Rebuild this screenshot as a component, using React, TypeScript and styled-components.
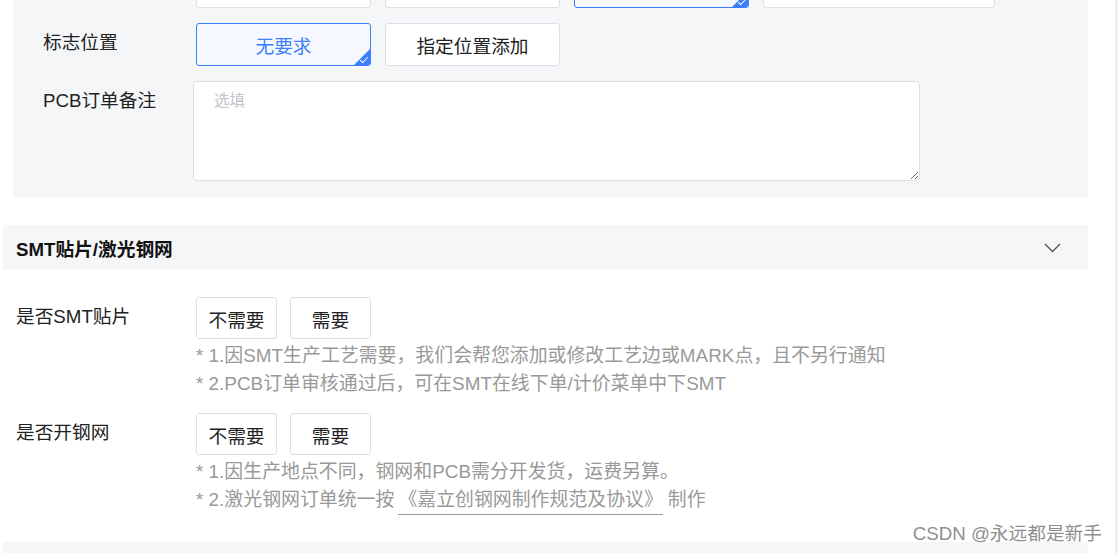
import styled, {createGlobalStyle} from 'styled-components';

const GlobalStyle = createGlobalStyle`
  html, body {
    margin: 0;
    padding: 0;
    background: #fff;
  }
  body {
    font-family: "Liberation Sans", "Noto Sans CJK SC", sans-serif;
    color: #222;
    overflow: hidden;
  }
  * {
    box-sizing: border-box;
  }
`;

const Page = styled.div`
  position: relative;
  display: flex;
  width: 1118px;
  height: 553px;
  overflow: hidden;
`;

const Main = styled.main`
  width: 1085px;
  margin-left: 3px;
  display: flex;
  flex-direction: column;

  & > * {
    flex-shrink: 0;
  }
`;

const ScrollTrack = styled.div`
  margin-left: auto;
  width: 3px;
  background: #eceef3;
`;

const OptionsPanel = styled.section`
  margin: -35px 0 0 10px;
  padding: 0 0 17px 30px;
  background: #f5f6f8;
  display: flex;
  flex-direction: column;
  gap: 15px;
`;

const FormRow = styled.div<{$labelWidth: number}>`
  display: grid;
  grid-template-columns: ${p => p.$labelWidth}px 1fr;
  align-items: start;
`;

const RowLabel = styled.div`
  font-size: 18.7px;
  line-height: 40px;
  color: #222;
  white-space: nowrap;
`;

const Controls = styled.div`
  display: flex;
  flex-direction: column;
  align-items: flex-start;
`;

const OptionGroup = styled.div<{$gap: number; $inset?: number}>`
  display: flex;
  gap: ${p => p.$gap}px;
  padding-left: ${p => p.$inset ?? 0}px;
`;

const OptionButton = styled.button<{$width: number; $height: number; $selected?: boolean}>`
  position: relative;
  width: ${p => p.$width}px;
  height: ${p => p.$height}px;
  padding: 0;
  overflow: hidden;
  border: 1px solid ${p => (p.$selected ? '#3d7efc' : '#dcdfe6')};
  border-radius: 3px;
  background: ${p => (p.$selected ? '#f5f9ff' : '#fff')};
  color: ${p => (p.$selected ? '#3d7efc' : '#222')};
  font-family: inherit;
  font-size: 18.7px;
  white-space: nowrap;
  cursor: pointer;

  &::after {
    content: '';
    display: ${p => (p.$selected ? 'block' : 'none')};
    position: absolute;
    right: 0;
    bottom: 0;
    width: 0;
    height: 0;
    border-left: 16px solid transparent;
    border-bottom: 16px solid #3d7efc;
  }

  &::before {
    content: '';
    display: ${p => (p.$selected ? 'block' : 'none')};
    position: absolute;
    z-index: 1;
    right: 2px;
    bottom: 4px;
    width: 7px;
    height: 3px;
    border-left: 1.5px solid #fff;
    border-bottom: 1.5px solid #fff;
    transform: rotate(-45deg);
  }
`;

const Remark = styled.textarea`
  width: 727px;
  height: 100px;
  margin: 0;
  padding: 9px 20px;
  border: 1px solid #dcdfe6;
  border-radius: 4px;
  background: #fff;
  font-family: inherit;
  font-size: 15.5px;
  line-height: 20px;
  color: #222;
  outline: none;

  &::placeholder {
    color: #c0c4cc;
  }
`;

const SectionHeader = styled.header`
  margin-top: 27px;
  height: 45px;
  padding: 0 27px 0 13px;
  display: flex;
  align-items: center;
  justify-content: space-between;
  background: #f5f6f8;
`;

const SectionTitle = styled.h2`
  margin: 0;
  font-size: 18.7px;
  font-weight: 700;
  color: #111;
`;

const SectionBody = styled.div`
  padding: 27px 0 0 13px;
  display: flex;
  flex-direction: column;
  gap: 15px;
`;

const Notes = styled.div`
  margin-top: 3px;
  font-size: 18.9px;
  line-height: 28px;
  color: #999;
  white-space: nowrap;
`;

const SpecLink = styled.a`
  margin: 0 5px 0 4px;
  padding-bottom: 4px;
  color: #999;
  text-decoration: none;
  border-bottom: 1px solid #999;
`;

const BottomBand = styled.div`
  margin-top: 28px;
  height: 20px;
  background: #f5f6f8;
`;

const Watermark = styled.div`
  position: absolute;
  right: 16px;
  bottom: 8px;
  font-size: 18.7px;
  color: #8f8f8f;
  text-shadow: 0 0 2px #fff;
  white-space: nowrap;
  pointer-events: none;
`;

function ChevronDown() {
  return (
    <svg width="17" height="10" viewBox="0 0 17 10" fill="none">
      <polyline points="1,1 8.5,8.5 16,1" stroke="#555" strokeWidth="1.4" />
    </svg>
  );
}

// first row is scrolled mostly out of view; only the bottom edges of its buttons show
const TOP_OPTIONS = [
  {id: 'a', width: 175},
  {id: 'b', width: 175},
  {id: 'c', width: 175, selected: true},
  {id: 'd', width: 232},
];

export default function App() {
  return (
    <Page>
      <GlobalStyle />
      <Main>
        <OptionsPanel>
          <FormRow $labelWidth={150}>
            <RowLabel />
            <Controls>
              <OptionGroup $gap={14} $inset={3}>
                {TOP_OPTIONS.map(o => (
                  <OptionButton key={o.id} $width={o.width} $height={43} $selected={o.selected} />
                ))}
              </OptionGroup>
            </Controls>
          </FormRow>
          <FormRow $labelWidth={150}>
            <RowLabel>标志位置</RowLabel>
            <Controls>
              <OptionGroup $gap={14} $inset={3}>
                <OptionButton $width={175} $height={43} $selected>无要求</OptionButton>
                <OptionButton $width={175} $height={43}>指定位置添加</OptionButton>
              </OptionGroup>
            </Controls>
          </FormRow>
          <FormRow $labelWidth={150}>
            <RowLabel>PCB订单备注</RowLabel>
            <Controls>
              <Remark placeholder="选填" />
            </Controls>
          </FormRow>
        </OptionsPanel>

        <SectionHeader>
          <SectionTitle>SMT贴片/激光钢网</SectionTitle>
          <ChevronDown />
        </SectionHeader>

        <SectionBody>
          <FormRow $labelWidth={180}>
            <RowLabel>是否SMT贴片</RowLabel>
            <Controls>
              <OptionGroup $gap={13}>
                <OptionButton $width={81} $height={42}>不需要</OptionButton>
                <OptionButton $width={81} $height={42}>需要</OptionButton>
              </OptionGroup>
              <Notes>
                <div>* 1.因SMT生产工艺需要，我们会帮您添加或修改工艺边或MARK点，且不另行通知</div>
                <div>* 2.PCB订单审核通过后，可在SMT在线下单/计价菜单中下SMT</div>
              </Notes>
            </Controls>
          </FormRow>
          <FormRow $labelWidth={180}>
            <RowLabel>是否开钢网</RowLabel>
            <Controls>
              <OptionGroup $gap={13}>
                <OptionButton $width={81} $height={42}>不需要</OptionButton>
                <OptionButton $width={81} $height={42}>需要</OptionButton>
              </OptionGroup>
              <Notes>
                <div>* 1.因生产地点不同，钢网和PCB需分开发货，运费另算。</div>
                <div>
                  * 2.激光钢网订单统一按
                  <SpecLink href="#">《嘉立创钢网制作规范及协议》</SpecLink>
                  制作
                </div>
              </Notes>
            </Controls>
          </FormRow>
        </SectionBody>

        <BottomBand />
      </Main>
      <ScrollTrack />
      <Watermark>CSDN @永远都是新手</Watermark>
    </Page>
  );
}
